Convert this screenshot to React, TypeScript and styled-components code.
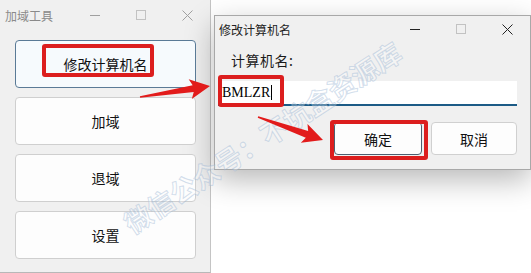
import styled, { createGlobalStyle } from "styled-components";

const GlobalStyle = createGlobalStyle`
  html, body {
    margin: 0;
    padding: 0;
    background: #ffffff;
  }
  body {
    font-family: "Noto Sans CJK SC", "Noto Sans", sans-serif;
  }
`;

const CJK = `"Noto Sans CJK SC", "Noto Sans", sans-serif`;

const Screen = styled.div`
  position: relative;
  width: 531px;
  height: 273px;
  overflow: hidden;
  display: flex;
  background: #ffffff;
`;

const MainWindow = styled.div`
  width: 210px;
  height: 272px;
  flex-shrink: 0;
  display: flex;
  flex-direction: column;
  background: #f0f0f0;
  border-right: 1px solid #c4c4c4;
  border-bottom: 1px solid #b8b8b8;
`;

const TitleBar = styled.div<{ $height: number }>`
  height: ${({ $height }) => $height}px;
  display: flex;
  align-items: center;
  flex-shrink: 0;
`;

const Title = styled.div<{ $color: string; $pad: number }>`
  flex: 1;
  padding-left: ${({ $pad }) => $pad}px;
  font-family: ${CJK};
  font-size: 12px;
  color: ${({ $color }) => $color};
  white-space: nowrap;
`;

const Caption = styled.div`
  width: 46px;
  height: 100%;
  display: flex;
  align-items: center;
  justify-content: center;
`;

const ButtonList = styled.div`
  display: flex;
  flex-direction: column;
  gap: 9px;
  padding: 10px 0 0 15px;
`;

const BigButton = styled.div<{ $focused?: boolean }>`
  position: relative;
  width: 181px;
  height: 48px;
  box-sizing: border-box;
  display: flex;
  align-items: center;
  justify-content: center;
  border-radius: 4px;
  border: 1px solid ${({ $focused }) => ($focused ? "#5a7a96" : "#cfcfcf")};
  background: ${({ $focused }) => ($focused ? "#f6fafd" : "#fdfdfd")};
  font-family: ${CJK};
  font-size: 14px;
  color: #111;
`;

const RedBox = styled.div<{ $l: number; $t: number; $w: number; $h: number }>`
  position: absolute;
  left: ${({ $l }) => $l}px;
  top: ${({ $t }) => $t}px;
  width: ${({ $w }) => $w}px;
  height: ${({ $h }) => $h}px;
  box-sizing: border-box;
  border: 4px solid #dc1e1e;
  border-radius: 3px;
  pointer-events: none;
`;

const Desktop = styled.div`
  flex: 1;
  padding: 15px 0 0 3px;
`;

const Dialog = styled.div`
  width: 317px;
  height: 155px;
  box-sizing: border-box;
  display: flex;
  flex-direction: column;
  background: #f0f0f0;
  border: 1px solid #a8a8a8;
  box-shadow: 0 10px 28px rgba(0, 0, 0, 0.28);
`;

const FieldLabel = styled.div`
  padding: 8px 0 0 16px;
  height: 24px;
  font-family: ${CJK};
  font-size: 14px;
  letter-spacing: 0.5px;
  color: #1a1a1a;
`;

const Input = styled.div`
  position: relative;
  margin: 7px 0 0 3px;
  width: 299px;
  height: 25px;
  box-sizing: border-box;
  display: flex;
  align-items: center;
  padding-left: 4px;
  background: #ffffff;
  border-bottom: 2px solid #1c5b86;
  font-family: "Liberation Serif", serif;
  font-size: 14px;
  color: #000;
`;

const Caret = styled.span`
  display: inline-block;
  width: 1px;
  height: 15px;
  background: #000;
  margin-left: 1px;
`;

const ButtonRow = styled.div`
  display: flex;
  justify-content: flex-end;
  gap: 9px;
  padding: 16px 13px 0 0;
`;

const DialogButton = styled.div<{ $w: number; $focused?: boolean }>`
  position: relative;
  width: ${({ $w }) => $w}px;
  height: 33px;
  box-sizing: border-box;
  display: flex;
  align-items: center;
  justify-content: center;
  border-radius: 4px;
  border: 1px solid ${({ $focused }) => ($focused ? "#4d5f70" : "#d0d0d0")};
  background: #fdfdfd;
  font-family: ${CJK};
  font-size: 14px;
  color: #111;
`;

const Overlay = styled.svg`
  position: absolute;
  left: 0;
  top: 0;
  pointer-events: none;
`;

const Watermark = styled.div`
  position: absolute;
  left: 262px;
  top: 137px;
  transform: translate(-50%, -50%) rotate(-33deg);
  white-space: nowrap;
  font-family: ${CJK};
  font-weight: 700;
  font-size: 27px;
  color: rgba(255, 255, 255, 0.3);
  -webkit-text-stroke: 1px rgba(150, 178, 210, 0.42);
  pointer-events: none;
`;

const CaptionIcons = ({ dim }: { dim: boolean }) => {
  const c = dim ? "#a0a0a0" : "#222";
  return (
    <>
      <Caption>
        <svg width="10" height="10" viewBox="0 0 10 10">
          <line x1="0" y1="5.5" x2="10" y2="5.5" stroke={c} strokeWidth="1" />
        </svg>
      </Caption>
      <Caption>
        <svg width="10" height="10" viewBox="0 0 10 10">
          <rect x="0.5" y="0.5" width="9" height="9" fill="none" stroke="#c2c2c2" strokeWidth="1" />
        </svg>
      </Caption>
      <Caption>
        <svg width="11" height="11" viewBox="0 0 11 11">
          <path d="M0.5 0.5 L10.5 10.5 M10.5 0.5 L0.5 10.5" stroke={c} strokeWidth="1" />
        </svg>
      </Caption>
    </>
  );
};

const Arrow = ({ x1, y1, x2, y2 }: { x1: number; y1: number; x2: number; y2: number }) => {
  const len = Math.hypot(x2 - x1, y2 - y1);
  const angle = (Math.atan2(y2 - y1, x2 - x1) * 180) / Math.PI;
  const h = 20;
  const pts = [
    [0, -0.8],
    [len - h + 3, -3.5],
    [len - h, -10],
    [len, 0],
    [len - h, 10],
    [len - h + 3, 3.5],
    [0, 0.8],
  ]
    .map((p) => p.join(","))
    .join(" ");
  return (
    <polygon
      points={pts}
      fill="#e21b1b"
      transform={`translate(${x1} ${y1}) rotate(${angle})`}
    />
  );
};

const App = () => {
  return (
    <Screen>
      <GlobalStyle />
      <MainWindow>
        <TitleBar $height={30}>
          <Title $color="#8a8a8a" $pad={5}>加域工具</Title>
          <CaptionIcons dim />
        </TitleBar>
        <ButtonList>
          <BigButton $focused>
            修改计算机名
            <RedBox $l={26} $t={3} $w={112} $h={33} />
          </BigButton>
          <BigButton>加域</BigButton>
          <BigButton>退域</BigButton>
          <BigButton>设置</BigButton>
        </ButtonList>
      </MainWindow>
      <Desktop>
        <Dialog>
          <TitleBar $height={26}>
            <Title $color="#222" $pad={4}>修改计算机名</Title>
            <CaptionIcons dim={false} />
          </TitleBar>
          <FieldLabel>计算机名:</FieldLabel>
          <Input>
            BMLZR
            <Caret />
            <RedBox $l={0} $t={-6} $w={66} $h={32} />
          </Input>
          <ButtonRow>
            <DialogButton $w={88} $focused>
              确定
              <RedBox $l={-5} $t={-3} $w={98} $h={40} />
            </DialogButton>
            <DialogButton $w={86}>取消</DialogButton>
          </ButtonRow>
        </Dialog>
      </Desktop>
      <Watermark>微信公众号：不坑盒资源库</Watermark>
      <Overlay width="531" height="273">
        <Arrow x1={140} y1={97} x2={210} y2={86} />
        <Arrow x1={258} y1={117} x2={323} y2={140} />
      </Overlay>
    </Screen>
  );
};

export default App;
